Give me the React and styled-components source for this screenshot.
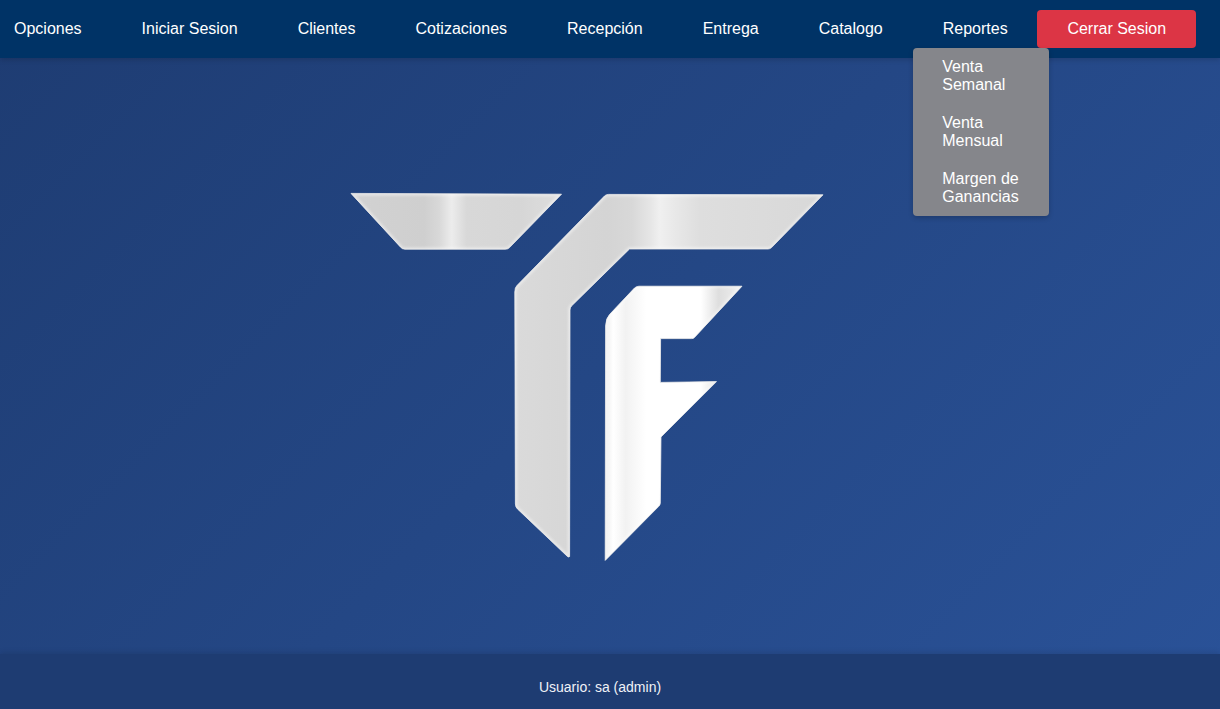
import styled, { createGlobalStyle } from "styled-components";

const GlobalStyle = createGlobalStyle`
  html, body {
    margin: 0;
    padding: 0;
    height: 100%;
    overflow: hidden;
  }
  body {
    font-family: "Liberation Sans", Arial, sans-serif;
    background: linear-gradient(135deg, #1e3c72, #2a5298);
    color: #fff;
  }
`;

const Page = styled.div`
  display: flex;
  flex-direction: column;
  height: 100vh;
`;

const Nav = styled.nav`
  position: relative;
  z-index: 2;
  display: flex;
  align-items: center;
  height: 58px;
  background: #003366;
  box-shadow: 0 2px 5px rgba(0, 0, 0, 0.15);
`;

const NavItem = styled.div`
  position: relative;
  padding: 10px 30px;
  font-size: 16px;
  line-height: 18px;
  color: #fff;
  white-space: nowrap;

  &:first-child {
    padding-left: 14px;
  }
`;

const LogoutButton = styled.button`
  height: 38px;
  margin-left: -0.6px;
  padding: 0 30.3px;
  border: 0;
  border-radius: 4px;
  background: #dc3545;
  color: #fff;
  font: inherit;
  font-size: 16px;
`;

const Dropdown = styled.div`
  position: absolute;
  top: 100%;
  left: 0;
  width: 136px;
  border-radius: 4px;
  background: #85868b;
  box-shadow: 0 2px 5px rgba(0, 0, 0, 0.2);
`;

const DropdownItem = styled.div`
  padding: 10px 20px 10px 29.5px;
  white-space: normal;
`;

const Main = styled.main`
  flex: 1;
  display: flex;
  align-items: center;
  justify-content: center;
`;

const Footer = styled.footer`
  position: relative;
  height: 55px;
  box-sizing: border-box;
  padding: 25px 20px 0 0;
  background: #1e3c72;
  box-shadow: 0 -2px 5px rgba(0, 0, 0, 0.1);
  font-size: 14px;
  line-height: 16px;
  text-align: center;
  color: #f0f2f7;
`;

const menuItems = ["Opciones", "Iniciar Sesion", "Clientes", "Cotizaciones", "Recepción", "Entrega", "Catalogo"];
const reportItems = ["Venta Semanal", "Venta Mensual", "Margen de Ganancias"];

const logoParts = [
  {
    id: "bowl",
    d: "M351 193.4 L561.5 194.2 L509.5 247.6 Q508 249.2 505.5 249.2 L405 249.2 Q402.2 249.2 400.6 247.2 Z",
  },
  {
    id: "tee",
    d: "M604.5 196 Q606 194.4 608.5 194.4 L823 194.8 L771.5 247.6 Q770 249 768 249 L629.5 249 L571.5 306 Q570 307.5 570 310 L569.6 556.5 Q568.8 557.5 567.5 556.5 L517.5 509 Q515.4 507 515.4 504 L514.8 292 Q514.8 287.5 517 285.5 Z",
  },
  {
    id: "eff",
    d: "M634.5 288 Q636.5 286.2 639 286.2 L742 286.2 L694.5 337.4 Q693.3 338.6 691.5 338.6 L660.6 338.6 L660.3 382.4 L716.5 381.6 L661 437 L660.3 503 Q660.3 505 658.5 506.6 L605.2 560.4 L605.6 326 Q605.8 318 610 314 Z",
  },
];

// viewBox uses the page coordinates of the mark, and stays centred in the main area
const Logo = () => (
  <svg width="540" height="412" viewBox="340 150 540 412" aria-label="TF">
    <defs>
      <linearGradient id="bowl-fill" gradientUnits="userSpaceOnUse" x1="350" y1="0" x2="562" y2="0">
        <stop offset="0" stopColor="#d2d2d2" />
        <stop offset="0.35" stopColor="#cfcfcf" />
        <stop offset="0.42" stopColor="#d8d8d8" />
        <stop offset="0.48" stopColor="#ececec" />
        <stop offset="0.55" stopColor="#d8d8d8" />
        <stop offset="0.8" stopColor="#d6d6d6" />
        <stop offset="1" stopColor="#dedede" />
      </linearGradient>
      <linearGradient id="tee-fill" gradientUnits="userSpaceOnUse" x1="515" y1="0" x2="823" y2="0">
        <stop offset="0" stopColor="#dadada" />
        <stop offset="0.3" stopColor="#d4d4d4" />
        <stop offset="0.38" stopColor="#d8d8d8" />
        <stop offset="0.44" stopColor="#e6e6e6" />
        <stop offset="0.47" stopColor="#f0f0f0" />
        <stop offset="0.52" stopColor="#e8e8e8" />
        <stop offset="0.6" stopColor="#dedede" />
        <stop offset="1" stopColor="#d8d8d8" />
      </linearGradient>
      <linearGradient id="eff-fill" gradientUnits="userSpaceOnUse" x1="605" y1="0" x2="742" y2="0">
        <stop offset="0" stopColor="#ececec" />
        <stop offset="0.06" stopColor="#ffffff" />
        <stop offset="0.15" stopColor="#f2f2f2" />
        <stop offset="0.3" stopColor="#ffffff" />
        <stop offset="0.7" stopColor="#ffffff" />
        <stop offset="0.83" stopColor="#dedede" />
        <stop offset="1" stopColor="#f0f0f0" />
      </linearGradient>
      <filter id="soft" x="-5%" y="-5%" width="110%" height="110%">
        <feGaussianBlur stdDeviation="0.6" />
      </filter>
      <filter id="bevel" x="-5%" y="-5%" width="110%" height="110%">
        <feGaussianBlur stdDeviation="1.2" />
      </filter>
      {logoParts.map((part) => (
        <clipPath key={part.id} id={`${part.id}-clip`}>
          <path d={part.d} />
        </clipPath>
      ))}
    </defs>
    {logoParts.map((part) => (
      <g key={part.id}>
        <path
          d={part.d}
          fill={`url(#${part.id}-fill)`}
          stroke="#e6e6e6"
          strokeWidth="0.8"
          strokeLinejoin="round"
          filter="url(#soft)"
        />
        {/* light bevel along the inner edge */}
        <g clipPath={`url(#${part.id}-clip)`}>
          <path d={part.d} fill="none" stroke="#ffffff" strokeOpacity="0.4" strokeWidth="4" filter="url(#bevel)" />
        </g>
      </g>
    ))}
  </svg>
);

export default function App() {
  return (
    <Page>
      <GlobalStyle />
      <Nav>
        {menuItems.map((item) => (
          <NavItem key={item}>{item}</NavItem>
        ))}
        <NavItem>
          Reportes
          <Dropdown>
            {reportItems.map((item) => (
              <DropdownItem key={item}>{item}</DropdownItem>
            ))}
          </Dropdown>
        </NavItem>
        <LogoutButton>Cerrar Sesion</LogoutButton>
      </Nav>
      <Main>
        <Logo />
      </Main>
      <Footer>Usuario: sa (admin)</Footer>
    </Page>
  );
}
